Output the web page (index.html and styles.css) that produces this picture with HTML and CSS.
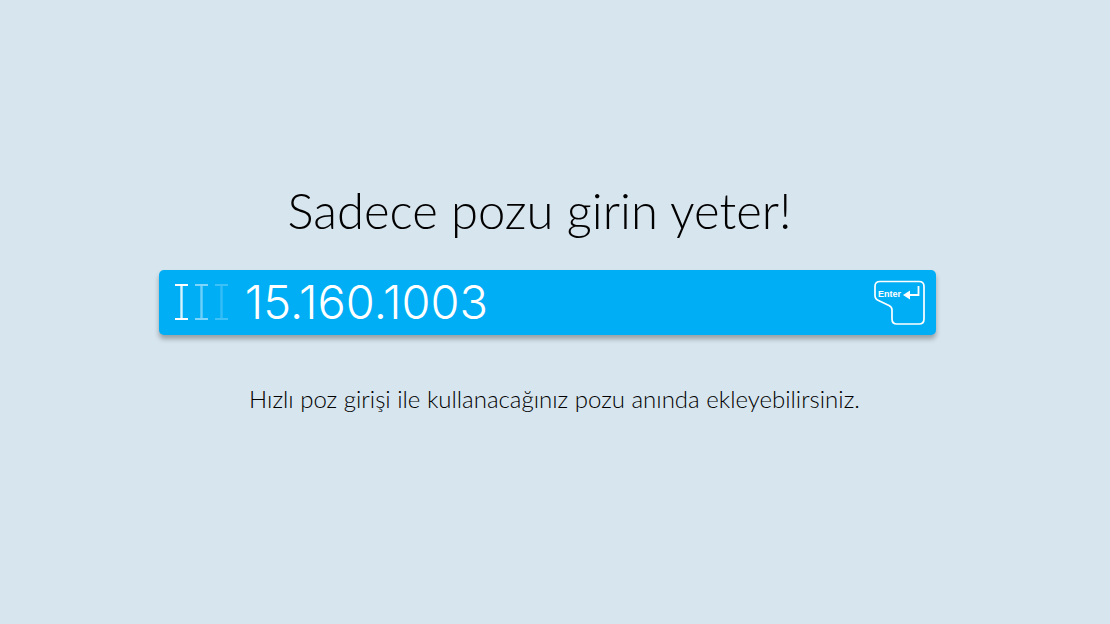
FILE: index.html
```html
<!DOCTYPE html>
<html lang="tr">
<head>
    <meta charset="UTF-8">
    <meta name="viewport" content="width=device-width, initial-scale=1.0">
    <title>Hızlı Poz Girişi</title>
    <link rel="stylesheet" href="styles.css">
</head>
<body>
    <main class="container">
        <h1><label for="poz">Sadece pozu girin yeter!</label></h1>

        <form class="poz-form">
            <svg class="cursors" viewBox="0 0 54 38" fill="none" stroke="#fff" aria-hidden="true">
                <g>
                    <path d="M0 2h13M0 36h13" stroke-width="2"/>
                    <path d="M6.500 2v34" stroke-width="2.400" opacity=".85"/>
                </g>
                <g opacity=".5">
                    <path d="M20 2h13M20 36h13" stroke-width="2"/>
                    <path d="M26.500 2v34" stroke-width="2.400" opacity=".85"/>
                </g>
                <g opacity=".24">
                    <path d="M40 2h13M40 36h13" stroke-width="2"/>
                    <path d="M46.500 2v34" stroke-width="2.400" opacity=".85"/>
                </g>
            </svg>
            <input type="text" id="poz" value="15.160.1003" autocomplete="off">
            <button type="submit" aria-label="Enter">
                <svg viewBox="0 0 52 46" fill="none" stroke="#fff">
                    <path d="M6 2.500H45Q50 2.500 50 7.500V40Q50 45 45 45H23Q18 45 18 40V31Q18 28 15 26.500L4.500 21.500Q1 20 1 16.500V7.500Q1 2.500 6 2.500Z" stroke-width="1.700"/>
                    <path d="M44.500 7V16H35" stroke-width="1.800"/>
                    <path d="M29 16L36 11.500V20.500Z" fill="#fff" stroke="none"/>
                    <text class="key-text" x="4" y="18">Enter</text>
                </svg>
            </button>
        </form>

        <p class="aciklama">Hızlı poz girişi ile kullanacağınız pozu anında ekleyebilirsiniz.</p>
    </main>
</body>
</html>
```
FILE: styles.css
```css
:root {
    --color-fondo: #d7e5ee;
    --color-bar: #00aef5;
}

* {
    margin: 0;
    padding: 0;
    box-sizing: border-box;
}

body {
    min-height: 100vh;
    padding-right: 15px;
    display: flex;
    align-items: center;
    justify-content: center;
    background-color: var(--color-fondo);
    color: #000;
    font-family: Lato, sans-serif;
    font-weight: 300;
}

.container {
    width: 71%;
    padding-bottom: 30px;
}

h1 {
    padding-right: 16px;
    margin-bottom: 30px;
    font-size: 49px;
    font-weight: 300;
    line-height: 60px;
    text-align: center;
}

.poz-form {
    display: flex;
    align-items: center;
    height: 65px;
    padding: 0 10px 0 16px;
    border-radius: 5px;
    background-color: var(--color-bar);
    box-shadow: 0 4px 5px rgba(0, 0, 0, 0.3);
}

.cursors {
    width: 54px;
    height: 38px;
}

#poz {
    flex: 1;
    min-width: 0;
    margin: 0 16px;
    border: none;
    outline: none;
    background: transparent;
    color: #fff;
    font-family: Inter, Lato, sans-serif;
    font-size: 47px;
    font-weight: 300;
    line-height: 60px;
}

button {
    border: none;
    background: none;
    cursor: pointer;
}

button svg {
    display: block;
    width: 52px;
    height: 46px;
}

.key-text {
    fill: #fff;
    stroke: none;
    font-family: "Liberation Sans", Arial, sans-serif;
    font-size: 9px;
    font-weight: 700;
}

.aciklama {
    padding-left: 14px;
    margin-top: 48px;
    font-size: 24px;
    line-height: 32px;
    text-align: center;
}
```
